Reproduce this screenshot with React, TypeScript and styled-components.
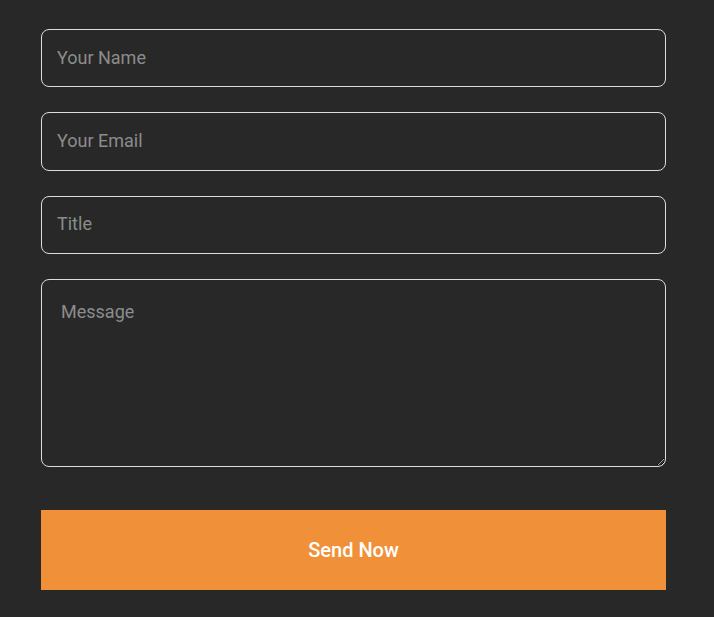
import styled, { createGlobalStyle } from 'styled-components'

const GlobalStyle = createGlobalStyle`
  html, body {
    margin: 0;
    padding: 0;
    background: #282828;
    font-family: Roboto, "Liberation Sans", sans-serif;
  }
`

const Page = styled.div`
  width: 714px;
  min-height: 617px;
  box-sizing: border-box;
  padding: 29px 48px 0 41px;
`

const Form = styled.form`
  display: flex;
  flex-direction: column;
  width: 625px;
`

const Field = styled.input`
  box-sizing: border-box;
  height: 58.4px;
  margin-bottom: 25px;
  padding: 0 15px 2px;
  border: 1px solid #dcdcdc;
  border-radius: 8px;
  background: transparent;
  color: #e6e6e6;
  font-family: Roboto, "Liberation Sans", sans-serif;
  font-size: 18px;
  outline: none;

  &::placeholder {
    color: #8c8c8c;
  }
`

const MessageBox = styled.textarea`
  box-sizing: border-box;
  height: 188px;
  padding: 21px 19px;
  border: 1px solid #dcdcdc;
  border-radius: 8px;
  background: transparent;
  color: #e6e6e6;
  font-family: Roboto, "Liberation Sans", sans-serif;
  font-size: 18px;
  outline: none;

  &::placeholder {
    color: #8c8c8c;
  }
`

const SendButton = styled.button`
  height: 80px;
  margin-top: 43px;
  border: none;
  background: #f0913a;
  color: #ffffff;
  font-family: Roboto, "Liberation Sans", sans-serif;
  font-size: 20px;
  font-weight: 500;
  cursor: pointer;
`

export default function App() {
  return (
    <Page>
      <GlobalStyle />
      <Form onSubmit={(e) => e.preventDefault()}>
        <Field type="text" placeholder="Your Name" />
        <Field type="email" placeholder="Your Email" />
        <Field type="text" placeholder="Title" />
        <MessageBox placeholder="Message" />
        <SendButton type="submit">Send Now</SendButton>
      </Form>
    </Page>
  )
}
